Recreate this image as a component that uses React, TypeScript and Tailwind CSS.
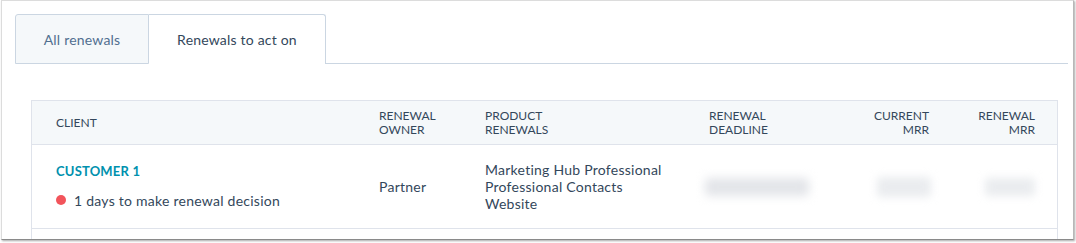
export default function App() {
  return (
    <div className="w-[1076px] h-[243px] bg-white overflow-hidden font-['Lato',sans-serif]">
      <div className="ml-[1px] w-[1073px] h-[240px] border border-[#dcdcdc] border-b-[#8a8a8a] border-r-[#b8b8b8] shadow-[1px_1px_2px_rgba(0,0,0,0.35)] overflow-hidden">
        <div className="pl-[13px] pr-[5px] pt-[13px]">
          {/* Tabs */}
          <div className="flex h-[50px]">
            <div className="w-[134px] flex items-center justify-center bg-[#f5f8fa] border border-[#cbd6e2] rounded-tl-[3px] text-[14px] tracking-[0.2px] text-[#516f90]">
              All renewals
            </div>
            <div className="w-[177px] flex items-center justify-center bg-white border-t border-r border-[#cbd6e2] rounded-tr-[3px] text-[14px] tracking-[0.2px] text-[#33475b]">
              Renewals to act on
            </div>
            <div className="flex-1 border-b border-[#cbd6e2]" />
          </div>

          {/* Table */}
          <div className="ml-[16px] mr-[10px] mt-[36px] border border-[#dfe3eb] text-[#33475b]">
            <div className="flex h-[44px] bg-[#f5f8fa] border-b border-[#dfe3eb] text-[12px] leading-[14px] uppercase items-center">
              <div className="w-[347px] pl-[24px] mt-[1px]">Client</div>
              <div className="w-[106px]">Renewal<br />Owner</div>
              <div className="w-[224px]">Product<br />Renewals</div>
              <div className="w-[150px]">Renewal<br />Deadline</div>
              <div className="w-[70px] text-right">Current<br />MRR</div>
              <div className="w-[106px] text-right">Renewal<br />MRR</div>
            </div>
            <div className="flex h-[84px] border-b border-[#dfe3eb] items-center text-[14px] tracking-[0.25px]">
              <div className="w-[347px] pl-[24px] -mt-[2px]">
                <div className="text-[#0091ae] font-bold text-[13px] tracking-[0.2px] leading-[17px]">CUSTOMER 1</div>
                <div className="flex items-center mt-[12px] leading-[17px]">
                  <span className="w-[10px] h-[10px] rounded-full bg-[#f2545b] mr-[8px]" />
                  1 days to make renewal decision
                </div>
              </div>
              <div className="w-[106px]">Partner</div>
              <div className="w-[224px] leading-[17px] -mt-[1px]">
                <div>Marketing Hub Professional</div>
                <div>Professional Contacts</div>
                <div>Website</div>
              </div>
              <div className="w-[150px] -ml-[4px]">
                <div className="w-[104px] h-[18px] bg-[#e3e5e9] blur-[5px] rounded" />
              </div>
              <div className="w-[76px] flex justify-end">
                <div className="w-[54px] h-[20px] bg-[#eaecef] blur-[4px] rounded" />
              </div>
              <div className="w-[104px] flex justify-end">
                <div className="w-[50px] h-[18px] bg-[#eaecef] blur-[4px] rounded" />
              </div>
            </div>
            <div className="h-[20px]" />
          </div>
        </div>
      </div>
    </div>
  );
}
